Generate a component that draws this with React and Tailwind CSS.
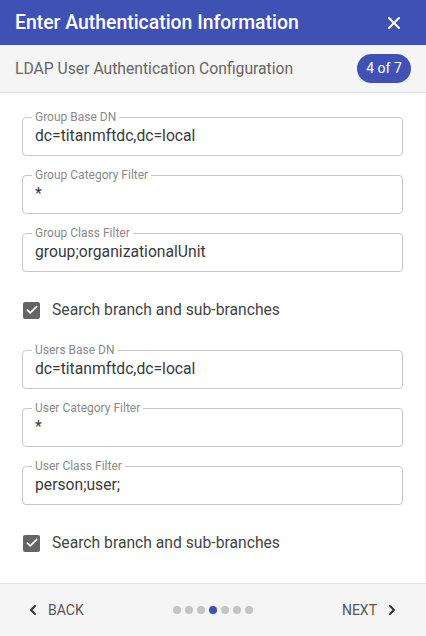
import React from 'react';
import { X, ChevronLeft, ChevronRight, Check } from 'lucide-react';

const Field = ({ label, value }) => (
    <fieldset className="h-[45px] rounded-[4px] border border-[#c8c8c8] px-[9px]">
        <legend className="px-[3px] text-[12px] leading-[12px] text-[#8a8a8a]">{label}</legend>
        <div className="px-[3px] pt-[2px] text-[15.7px] leading-[22px] text-[#3a3a3a]">{value}</div>
    </fieldset>
);

const CheckRow = ({ label, className }) => (
    <label className={`flex items-center gap-[12px] h-[24px] pl-[1px] ${className}`}>
        <span className="w-[17px] h-[17px] rounded-[2px] bg-[#656565] flex items-center justify-center">
            <Check size={14} strokeWidth={3} className="text-white" />
        </span>
        <span className="text-[15.7px] text-[#444]">{label}</span>
    </label>
);

const App = () => {
    const dots = [0, 1, 2, 3, 4, 5, 6];

    return (
        <div className="w-[426px] h-[636px] flex flex-col bg-white font-['Roboto',sans-serif]">
            <div className="h-[45px] shrink-0 bg-[#3f51b5] flex items-center justify-between pl-[15px] pr-[22px]">
                <h1 className="text-[19.4px] font-medium text-white">Enter Authentication Information</h1>
                <X size={20} strokeWidth={2.5} className="text-white" />
            </div>

            <div className="h-[48px] shrink-0 bg-[#f5f5f5] border-b border-[#e0e0e0] flex items-center justify-between pl-[15px] pr-[15px]">
                <p className="text-[15.7px] text-[#666]">LDAP User Authentication Configuration</p>
                <span className="h-[29px] w-[54px] rounded-full bg-[#3f51b5] text-white text-[14px] flex items-center justify-center">
                    4 of 7
                </span>
            </div>

            <div className="flex-1 px-[22px] pt-[18px] border-r border-[#f0f0f0]">
                <div className="flex flex-col gap-[13px]">
                    <Field label="Group Base DN" value="dc=titanmftdc,dc=local" />
                    <Field label="Group Category Filter" value="*" />
                    <Field label="Group Class Filter" value="group;organizationalUnit" />
                </div>
                <CheckRow label="Search branch and sub-branches" className="mt-[26px] mb-[22px]" />
                <div className="flex flex-col gap-[13px]">
                    <Field label="Users Base DN" value="dc=titanmftdc,dc=local" />
                    <Field label="User Category Filter" value="*" />
                    <Field label="User Class Filter" value="person;user;" />
                </div>
                <CheckRow label="Search branch and sub-branches" className="mt-[26px]" />
            </div>

            <div className="h-[53px] shrink-0 bg-[#f5f5f5] border-t border-[#e0e0e0] flex items-center justify-between pl-[25px] pr-[26px]">
                <button className="flex items-center gap-[7px] text-[14px] text-[#555]">
                    <ChevronLeft size={16} strokeWidth={3} className="text-[#333]" />
                    BACK
                </button>
                <div className="flex items-center gap-[4px]">
                    {dots.map(i => (
                        <span key={i} className={`w-[8px] h-[8px] rounded-full ${i === 3 ? 'bg-[#3f51b5]' : 'bg-[#c4c4c4]'}`} />
                    ))}
                </div>
                <button className="flex items-center gap-[7px] text-[14px] text-[#555]">
                    NEXT
                    <ChevronRight size={16} strokeWidth={3} className="text-[#333]" />
                </button>
            </div>
        </div>
    );
};

export default App;
